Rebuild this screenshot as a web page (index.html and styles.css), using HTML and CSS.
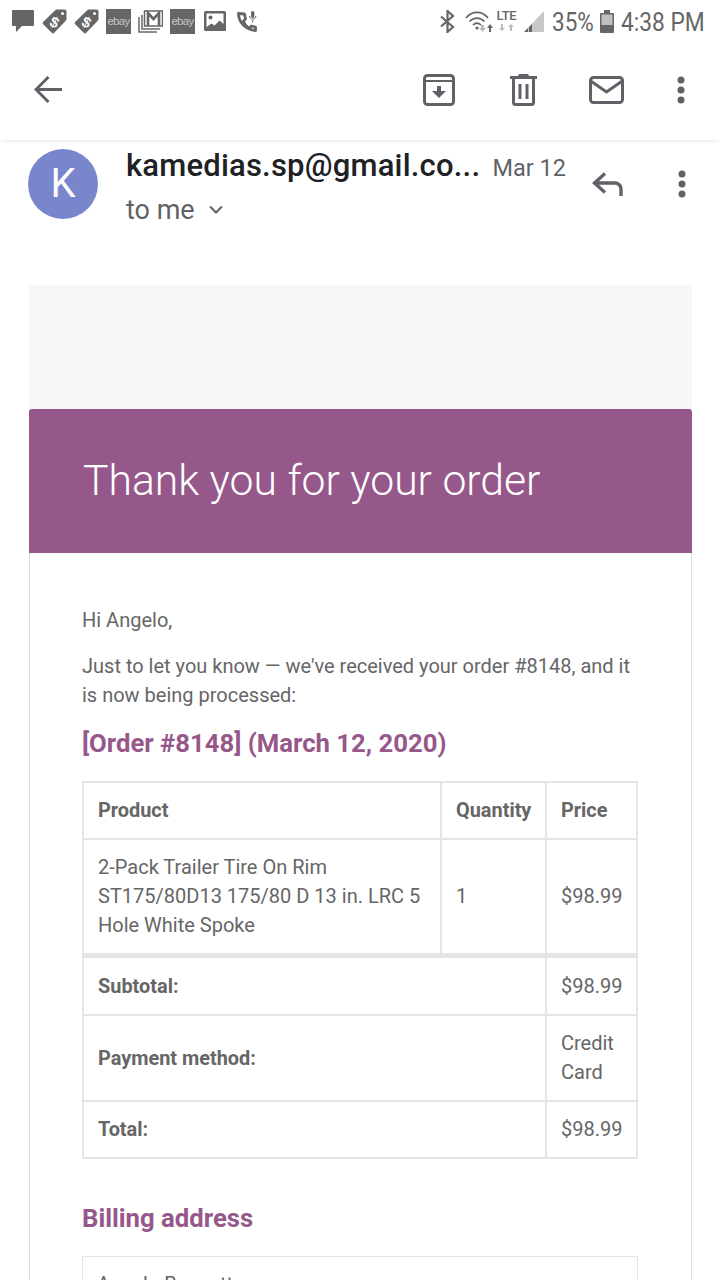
FILE: index.html
```html
<!DOCTYPE html>
<html lang="en">
<head>
<meta charset="utf-8">
<title>Order</title>
<link rel="stylesheet" href="styles.css">
</head>
<body>
<div class="screen">
  <div class="status">
    <div class="status-left">
      <svg class="si chat" viewBox="0 0 22 22" width="22" height="22"><path fill="#666" d="M1 0h20a1 1 0 0 1 1 1v14a1 1 0 0 1-1 1H10l-6 6v-6H1a1 1 0 0 1-1-1V1a1 1 0 0 1 1-1z"/></svg>
      <svg class="si tag" viewBox="0 0 25 25" width="25" height="25"><path fill="#666" d="M15 .5h7.500a2 2 0 0 1 2 2V10a3 3 0 0 1-1 2L12 24a1.500 1.500 0 0 1-2 0L1 15a1.500 1.500 0 0 1 0-2L13 1.500a3 3 0 0 1 2-1z"/><circle cx="20.500" cy="4.500" r="1.500" fill="#fff"/><text x="12.500" y="18.500" class="tagd" transform="rotate(25 12.500 13)">$</text></svg>
      <svg class="si tag" viewBox="0 0 25 25" width="25" height="25"><path fill="#666" d="M15 .5h7.500a2 2 0 0 1 2 2V10a3 3 0 0 1-1 2L12 24a1.500 1.500 0 0 1-2 0L1 15a1.500 1.500 0 0 1 0-2L13 1.500a3 3 0 0 1 2-1z"/><circle cx="20.500" cy="4.500" r="1.500" fill="#fff"/><text x="12.500" y="18.500" class="tagd" transform="rotate(25 12.500 13)">$</text></svg>
      <span class="ebay">ebay</span>
      <svg class="si" viewBox="0 0 25 23" width="25" height="23"><path fill="none" stroke="#666" stroke-width="1.500" d="M1 7v15h18"/><path fill="none" stroke="#666" stroke-width="1.500" d="M4 5v14h18"/><path fill="#fff" stroke="#666" stroke-width="1.500" d="M6.500 1h18v15h-18z"/><path fill="none" stroke="#666" stroke-width="2.600" d="M10 16V3l5.500 6L21 3v13"/></svg>
      <span class="ebay">ebay</span>
      <svg class="si photo" viewBox="0 0 22 20" width="22" height="20"><rect width="22" height="20" rx="1.500" fill="#666"/><path fill="#fff" d="M2.500 2.500h17V13l-4-3.500-5 5-3-2-5 3.500z"/><circle cx="6.500" cy="6.500" r="2" fill="#666"/></svg>
      <svg class="si call" viewBox="0 0 20 21" width="20" height="21"><path fill="none" stroke="#666" stroke-width="2.800" stroke-linejoin="round" d="M1.500 2.500c0 9 7 16 17 17v-3.500l-4-1-2 2c-3-1-5-4-6-7l2-2-1-5z"/><rect x="14" y="0" width="3.400" height="7" rx="1.700" fill="#666"/><path fill="none" stroke="#666" d="M12.500 5c0 4 6.400 4 6.400 0M15.700 9v2.500"/></svg>
    </div>
    <div class="status-right">
      <svg class="sr bt" viewBox="0 0 15 23" width="15" height="23"><path fill="none" stroke="#666" stroke-width="2.200" d="M1 6.500l12 10.500-5.500 5V1L13 6 1 16.500"/></svg>
      <svg class="sr wifi" viewBox="0 0 28 21" width="28" height="21"><path fill="none" stroke="#666" stroke-width="1.700" d="M1 7c6-7.500 16-7.500 22 0M4.500 10.500c4.500-4.500 10.500-4.500 15 0M8 14c2.500-2.500 5.500-2.500 8 0"/><circle cx="12" cy="17" r="1.600" fill="#666"/><path fill="#bbb" d="M16 14h3v3h2l-3.500 4-3.500-4h2z"/><path fill="#666" d="M25 13l3 4h-2v4h-2v-4h-2z"/></svg>
      <span class="lte"><span class="lte-t">LTE</span><span class="lte-a"><svg viewBox="0 0 16 7" width="16" height="7"><path fill="#bbb" d="M2 0h2v4h2L3 7 0 4h2zM12 0l3 3h-2v4h-2V3H9z"/></svg></span></span>
      <svg class="sr sig" viewBox="0 0 20 21" width="20" height="21"><path fill="#c8c8c8" d="M20 0v21H0z"/><path fill="#666" d="M0 21l4-4v4zM5 16l3-3v8H5z"/></svg>
      <span class="pct">35%</span>
      <svg class="sr bat" viewBox="0 0 14 23" width="14" height="23"><path fill="#c0c0c0" d="M1 4h12v18H1z"/><path fill="#666" d="M0 4a1 1 0 0 1 1-1h3V0h6v3h3a1 1 0 0 1 1 1v18a1 1 0 0 1-1 1H1a1 1 0 0 1-1-1zM1.500 4.500V15h11V4.500z"/></svg>
      <span class="clock">4:38 PM</span>
    </div>
  </div>

  <div class="appbar">
    <svg class="back" viewBox="0 0 28 27" width="28" height="27"><path fill="none" stroke="#5f6368" stroke-width="3" d="M28 13.500H3M14.500 1L2 13.500 14.500 26"/></svg>
    <div class="actions">
      <svg class="a-arch" viewBox="0 0 32 32" width="32" height="32"><rect x="1.500" y="1.500" width="29" height="29" rx="3" fill="none" stroke="#5f6368" stroke-width="3"/><path fill="none" stroke="#5f6368" stroke-width="2" d="M3 7h26"/><path fill="#5f6368" d="M14 12h4v5h5l-7 7-7-7h5z"/></svg>
      <svg class="a-trash" viewBox="0 0 27 32" width="27" height="32"><path fill="none" stroke="#5f6368" stroke-width="3" d="M3.500 5v23.500a2 2 0 0 0 2 2h16a2 2 0 0 0 2-2V5"/><path fill="#5f6368" d="M0 2h8l1-2h9l1 2h8v3H0zM8.500 10h3v15h-3zM15.500 10h3v15h-3z"/></svg>
      <svg class="a-mail" viewBox="0 0 35 28" width="35" height="28"><rect x="1.500" y="1.500" width="32" height="25" rx="3" fill="none" stroke="#5f6368" stroke-width="3"/><path fill="none" stroke="#5f6368" stroke-width="3" d="M2.500 5.500l15 10.500 15-10.500"/></svg>
      <svg class="dots" viewBox="0 0 8 28" width="8" height="28"><circle cx="4" cy="4" r="3.500" fill="#5f6368"/><circle cx="4" cy="14" r="3.500" fill="#5f6368"/><circle cx="4" cy="24" r="3.500" fill="#5f6368"/></svg>
    </div>
  </div>

  <div class="msg-head">
    <div class="avatar">K</div>
    <div class="who">
      <div class="line1"><span class="sender">kamedias.sp@gmail.co...</span><span class="date">Mar 12</span></div>
      <div class="tome">to me <svg viewBox="0 0 14 10" width="14" height="10"><path fill="none" stroke="#5f6368" stroke-width="2" d="M1 1.500l6 6 6-6"/></svg></div>
    </div>
    <svg class="reply" viewBox="0 0 32 26" width="32" height="26"><path fill="none" stroke="#5f6368" stroke-width="3.400" d="M13 1.500L2.500 11 13 20.500M2.500 11H23a6 6 0 0 1 6 6v7"/></svg>
    <svg class="dots2" viewBox="0 0 8 28" width="8" height="28"><circle cx="4" cy="4" r="3.500" fill="#5f6368"/><circle cx="4" cy="14" r="3.500" fill="#5f6368"/><circle cx="4" cy="24" r="3.500" fill="#5f6368"/></svg>
  </div>

  <div class="mail">
    <div class="mail-top"></div>
    <div class="banner"><h1>Thank you for your order</h1></div>
    <div class="content">
      <p class="hi">Hi Angelo,</p>
      <p class="intro">Just to let you know — we've received your order #8148, and it is now being processed:</p>
      <h2 class="order">[Order #8148] (March 12, 2020)</h2>
      <table class="tbl">
        <colgroup><col class="c1"><col class="c2"><col class="c3"></colgroup>
        <thead>
          <tr><th>Product</th><th>Quantity</th><th>Price</th></tr>
        </thead>
        <tbody>
          <tr><td>2-Pack Trailer Tire On Rim ST175/80D13 175/80 D 13 in. LRC 5 Hole White Spoke</td><td>1</td><td>$98.99</td></tr>
        </tbody>
        <tfoot>
          <tr class="first"><th colspan="2">Subtotal:</th><td>$98.99</td></tr>
          <tr><th colspan="2">Payment method:</th><td>Credit Card</td></tr>
          <tr><th colspan="2">Total:</th><td>$98.99</td></tr>
        </tfoot>
      </table>
      <h2 class="billing">Billing address</h2>
      <div class="addr">Angelo Bennett</div>
    </div>
  </div>
</div>
</body>
</html>
```
FILE: styles.css
```css
* { box-sizing: border-box; }
html, body { margin: 0; padding: 0; background: #fff; }
body { width: 720px; height: 1280px; overflow: hidden; font-family: Roboto, "Liberation Sans", sans-serif; color: #666; }
.screen { width: 720px; height: 1280px; overflow: hidden; background: #fff; }

.status { height: 44px; display: flex; justify-content: space-between; align-items: center; padding: 0 15px 2px 12px; }
.status-left { display: flex; align-items: center; gap: 7px; }
.si { display: block; flex: none; }
.chat { margin-right: 1px; }
.photo { margin-left: 2px; margin-right: 4px; }
.tagd { font: bold 15px "Liberation Sans", sans-serif; fill: #fff; text-anchor: middle; }
.ebay { width: 25px; height: 25px; background: #666; color: #c4c4c4; font: 11.500px/24px "Liberation Sans", sans-serif; letter-spacing: -0.7px; text-align: center; overflow: hidden; }
.status-right { display: flex; align-items: center; }
.sr { display: block; flex: none; }
.bt { margin-right: 10px; }
.wifi { margin-right: 3px; }
.lte { display: flex; flex-direction: column; align-items: center; width: 21px; color: #666; margin-right: 7px; }
.lte-t { font: 500 13px/12px Roboto, sans-serif; letter-spacing: -0.3px; }
.lte-a { height: 9px; margin-top: 2px; }
.lte-a svg { display: block; }
.sig { margin-right: 8px; }
.pct { width: 41px; font-size: 25px; line-height: 30px; margin-top: 3px; color: #666; margin-right: 7px; white-space: nowrap; transform: scaleX(.9); transform-origin: left center; }
.bat { margin-right: 7px; }
.clock { width: 84px; font-size: 25px; line-height: 30px; margin-top: 3px; color: #666; white-space: nowrap; transform: scaleX(.91); transform-origin: left center; }

.appbar { height: 96px; display: flex; justify-content: space-between; align-items: center; padding: 0 35px 5px 34px; box-shadow: 0 3px 3px -1px rgba(0,0,0,.07); position: relative; }
.back { display: block; }
.actions { display: flex; align-items: center; }
.actions svg { display: block; }
.a-arch { margin-right: 55px; }
.a-trash { margin-right: 52px; }
.a-mail { margin-right: 53px; }

.msg-head { height: 145px; display: flex; align-items: flex-start; padding: 9px 34px 0 28px; }
.avatar { width: 70px; height: 70px; border-radius: 50%; background: #7986cb; color: #fff; font-size: 40px; line-height: 70px; text-align: center; flex: none; }
.who { margin-left: 28px; width: 440px; flex: none; }
.line1 { display: flex; align-items: baseline; justify-content: space-between; height: 36px; }
.sender { font-size: 31px; line-height: 34px; font-weight: 500; color: #202124; letter-spacing: 0.2px; white-space: nowrap; }
.date { font-size: 23.500px; color: #5f6368; white-space: nowrap; }
.tome { font-size: 27px; line-height: 34px; margin-top: 8px; color: #5f6368; display: flex; align-items: center; gap: 14px; }
.reply { margin: 23px 0 0 26px; flex: none; }
.dots2 { margin: 21px 0 0 auto; flex: none; }

.mail { margin: 0 28px 0 29px; }
.mail-top { height: 124px; background: #f7f7f7; }
.banner { height: 144px; background: #96588a; border-radius: 3px 3px 0 0; padding: 45px 54px 0; }
.banner h1 { margin: 0; color: #fff; font-size: 42.700px; line-height: 52px; font-weight: 300; }
.content { border: 1px solid #dedede; border-top: 0; padding: 53px 54px 0 52px; height: 760px; }
.hi { margin: 0; font-size: 20px; line-height: 29px; }
.intro { margin: 17px 0 0; font-size: 20px; line-height: 29px; }
.order { margin: 15px 0 0; font-size: 25.700px; line-height: 36px; font-weight: 700; color: #96588a; }
.billing { margin: 41px 0 0; font-size: 25.700px; line-height: 36px; font-weight: 700; color: #96588a; }

.tbl { width: 554px; margin-top: 20px; border-collapse: collapse; table-layout: fixed; font-size: 20px; line-height: 29px; border: 2px solid #e5e5e5; }
.c1 { width: 358px; } .c2 { width: 105px; } .c3 { width: 91px; }
.tbl th, .tbl td { border: 2px solid #e5e5e5; padding: 13px 14px; text-align: left; vertical-align: middle; }
.tbl th { font-weight: 700; font-size: 19.900px; }
.tbl tfoot .first th, .tbl tfoot .first td { border-top: 5px solid #e5e5e5; padding-top: 14px; }

.addr { margin-top: 20px; border: 1px solid #e5e5e5; padding: 13px 14px; font-size: 20px; line-height: 29px; height: 100px; width: 556px; }
```
